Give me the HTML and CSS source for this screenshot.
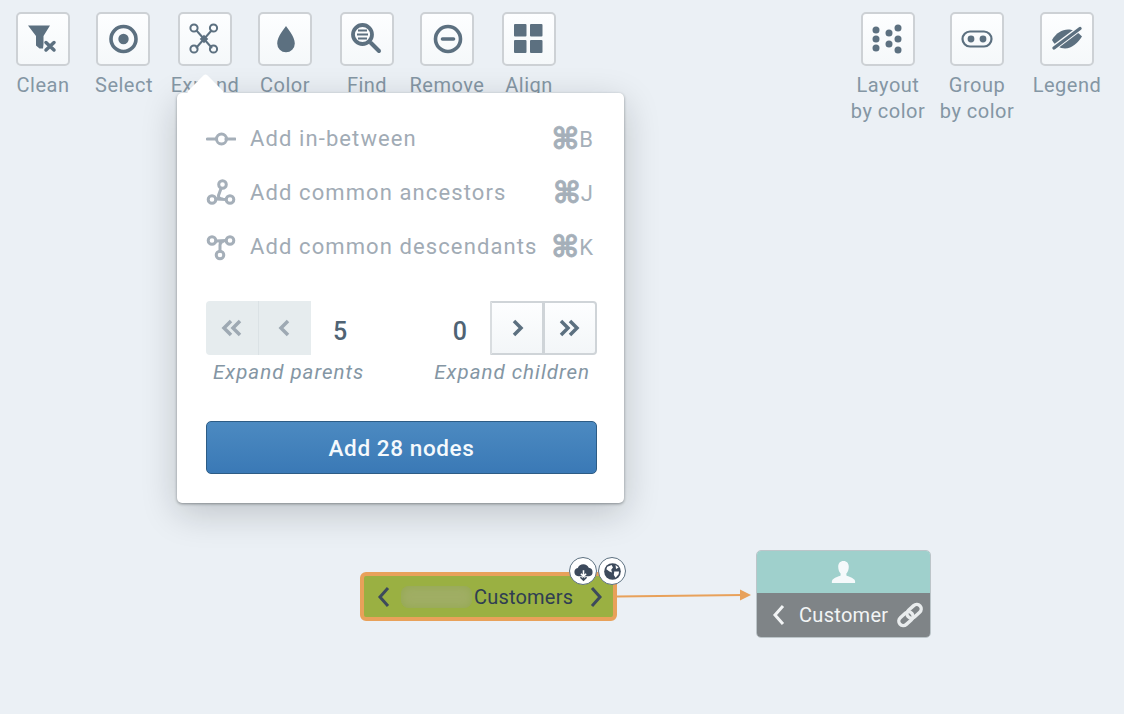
FILE: index.html
```html
<!DOCTYPE html>
<html lang="en">
<head>
<meta charset="utf-8">
<title>Graph</title>
<link rel="stylesheet" href="styles.css">
</head>
<body>
<div class="page">
  <header class="toolbar">
    <div class="tool-group">
      <div class="tool">
        <div class="tool-btn"><svg class="glyph" viewBox="0 0 54 54"><path class="fill" d="M12 13.500H34L27.500 24v8l-.5 4.500h-3.500L20 33.500V24z"/><path class="line" d="M30 30.500l8 7.500M38 30.500l-8 7.500" stroke-width="3.500"/></svg></div>
        <span class="tool-label">Clean</span>
      </div>
      <div class="tool step-b nudge">
        <div class="tool-btn"><svg class="glyph" viewBox="0 0 54 54"><circle class="line" cx="27.500" cy="27" r="12.500" stroke-width="3.600"/><circle class="fill" cx="27.500" cy="27" r="5.200"/></svg></div>
        <span class="tool-label">Select</span>
      </div>
      <div class="tool step-c">
        <div class="tool-btn"><svg class="glyph" viewBox="0 0 54 54"><path class="line" d="M18.500 18.500l15 17M33.500 18.500l-15 17" stroke-width="2"/><circle class="line" cx="16" cy="16" r="3.600" stroke-width="2"/><circle class="line" cx="35.500" cy="16" r="3.600" stroke-width="2"/><circle class="line" cx="16" cy="37" r="3.600" stroke-width="2"/><circle class="line" cx="35.500" cy="37" r="3.600" stroke-width="2"/><rect class="fill" x="23" y="24" width="6" height="6" transform="rotate(45 26 27)"/></svg></div>
        <span class="tool-label">Expand</span>
      </div>
      <div class="tool step-b">
        <div class="tool-btn"><svg class="glyph" viewBox="0 0 54 54"><path class="fill" d="M28 14c-1 2-8.800 10-8.800 17.500a8.800 8.800 0 0 0 17.600 0C36.800 24 29 16 28 14z"/></svg></div>
        <span class="tool-label">Color</span>
      </div>
      <div class="tool step-c">
        <div class="tool-btn"><svg class="glyph" viewBox="0 0 54 54"><circle class="line" cx="22.500" cy="22.500" r="9.500" stroke-width="3.800"/><path class="line" d="M31 31l8 8" stroke-width="4"/><path class="line butt" d="M18 18.500h9M17 22.500h11M18 26.500h9" stroke-width="2"/></svg></div>
        <span class="tool-label">Find</span>
      </div>
      <div class="tool step-b">
        <div class="tool-btn"><svg class="glyph" viewBox="0 0 54 54"><circle class="line" cx="28" cy="27" r="12.500" stroke-width="3.600"/><path class="line" d="M22.500 27h11" stroke-width="3.600"/></svg></div>
        <span class="tool-label">Remove</span>
      </div>
      <div class="tool step-c">
        <div class="tool-btn"><svg class="glyph" viewBox="0 0 54 54"><rect class="fill" x="12" y="12" width="12.500" height="12.500" rx="1"/><rect class="fill" x="28" y="12" width="12.500" height="12.500" rx="1"/><rect class="fill" x="12" y="28" width="12.500" height="13" rx="1"/><rect class="fill" x="28" y="28" width="12.500" height="13" rx="1"/></svg></div>
        <span class="tool-label">Align</span>
      </div>
    </div>
    <div class="tool-group">
      <div class="tool">
        <div class="tool-btn"><svg class="glyph" viewBox="0 0 54 54"><g class="fill"><circle cx="15" cy="18" r="3.500"/><circle cx="15" cy="27" r="3.500"/><circle cx="15" cy="36" r="3.500"/><circle cx="28" cy="21" r="3.500"/><circle cx="28" cy="32" r="3.500"/><circle cx="37" cy="16" r="3.500"/><circle cx="37" cy="27" r="3.500"/><circle cx="37" cy="38" r="3.500"/></g></svg></div>
        <span class="tool-label">Layout<br>by color</span>
      </div>
      <div class="tool right-b">
        <div class="tool-btn"><svg class="glyph" viewBox="0 0 54 54"><rect class="line" x="12.500" y="19.500" width="29" height="15" rx="7.500" stroke-width="2.200"/><circle class="fill" cx="21" cy="27" r="3.400"/><circle class="fill" cx="33" cy="27" r="3.400"/></svg></div>
        <span class="tool-label">Group<br>by color</span>
      </div>
      <div class="tool right-c">
        <div class="tool-btn"><svg class="glyph" viewBox="0 0 54 54"><path class="fill" d="M12 28c4-7 10-10.500 16-10.500 5 0 10 2.500 14 7-4 6-10 12-17 12-5 0-10-3-13-8.500z"/><path class="slash-gap" d="M11 38L43 14"/><path class="line" d="M14 36L40 16.500" stroke-width="3.400"/></svg></div>
        <span class="tool-label">Legend</span>
      </div>
    </div>
  </header>

  <section class="popover">
    <span class="pop-arrow"></span>
    <ul class="menu">
      <li class="menu-row">
        <svg class="menu-icon" viewBox="0 0 30 30"><path class="muted" d="M1.500 15h9M20 15h9" stroke-width="3.200"/><circle class="muted" cx="15.500" cy="15" r="5" stroke-width="3"/></svg>
        <span class="menu-text">Add in-between</span>
        <span class="kbd"><span class="cmd">⌘</span>B</span>
      </li>
      <li class="menu-row">
        <svg class="menu-icon" viewBox="0 0 30 30"><circle class="muted" cx="16.500" cy="6.500" r="3.800" stroke-width="3"/><circle class="muted" cx="6" cy="21.500" r="3.800" stroke-width="3"/><circle class="muted" cx="24" cy="21.500" r="3.800" stroke-width="3"/><path class="muted" d="M10 21l10 .5M15 10.500l-2.500 7q-.5 3 4 3.500" stroke-width="3"/></svg>
        <span class="menu-text">Add common ancestors</span>
        <span class="kbd"><span class="cmd">⌘</span>J</span>
      </li>
      <li class="menu-row">
        <svg class="menu-icon" viewBox="0 0 30 30"><circle class="muted" cx="6" cy="8.500" r="3.800" stroke-width="3"/><circle class="muted" cx="24" cy="8.500" r="3.800" stroke-width="3"/><circle class="muted" cx="14" cy="23" r="3.800" stroke-width="3"/><path class="muted" d="M10 9l10-.5M14 19v-6q0-3 4-4" stroke-width="3"/></svg>
        <span class="menu-text">Add common descendants</span>
        <span class="kbd"><span class="cmd">⌘</span>K</span>
      </li>
    </ul>

    <div class="steppers">
      <div class="stepper">
        <div class="stepper-top">
          <div class="seg seg-off">
            <span class="seg-cell"><svg class="chev" viewBox="0 0 24 24"><path d="M11 5l-7 7 7 7M20 5l-7 7 7 7"/></svg></span>
            <span class="seg-cell"><svg class="chev" viewBox="0 0 24 24"><path d="M15 5l-7 7 7 7"/></svg></span>
          </div>
          <span class="count count-left">5</span>
        </div>
        <span class="step-label label-left">Expand parents</span>
      </div>
      <div class="stepper stepper-end">
        <div class="stepper-top">
          <span class="count count-right">0</span>
          <div class="seg seg-on">
            <span class="seg-cell"><svg class="chev" viewBox="0 0 24 24"><path d="M9 5l7 7-7 7"/></svg></span>
            <span class="seg-cell"><svg class="chev" viewBox="0 0 24 24"><path d="M3 5l7 7-7 7M12 5l7 7-7 7"/></svg></span>
          </div>
        </div>
        <span class="step-label label-right">Expand children</span>
      </div>
    </div>

    <button class="primary">Add 28 nodes</button>
  </section>

  <svg class="edge" viewBox="0 0 136 14"><path d="M0 8.500L126 7" stroke="#e8a15a" stroke-width="2" fill="none"/><path d="M123 1.500L134 7l-11 5.500z" fill="#e8a15a"/></svg>

  <div class="node-src">
    <svg class="node-chev" viewBox="0 0 16 24"><path d="M12 3l-8 9 8 9"/></svg>
    <span class="redact"></span>
    <span class="node-src-name">Customers</span>
    <svg class="node-chev" viewBox="0 0 16 24"><path d="M4 3l8 9-8 9"/></svg>
  </div>

  <span class="badge badge-cloud"><svg viewBox="0 0 24 24"><path class="badge-ink" d="M6 17.500a4.800 4.800 0 0 1-.5-9.500A6.800 6.800 0 0 1 18 7.800a4.900 4.900 0 0 1 .3 9.700z"/><path class="badge-arrow" d="M12 13v9M8.500 18.500l3.500 3.500 3.500-3.500"/><path class="badge-cut" d="M12 10.500v6M9 14.500l3 3 3-3"/></svg></span>
  <span class="badge badge-globe"><svg viewBox="0 0 24 24"><circle class="badge-ink" cx="12" cy="12" r="9.500"/><path class="badge-land" d="M6 6.500l5-2 1.500 3-2 2.500 1 3-3-1-3.500-2.500zM14 12l5.500 0-.5 3-3.500 4-2-3zM15.500 4.500l3.500 3-3 1.500z"/></svg></span>

  <div class="node-dst">
    <div class="node-dst-top"><svg class="person" viewBox="0 0 26 26"><path d="M13 1c3.500 0 5.500 2.500 5.500 6 0 3-1 5.500-2.500 7v2c2 1 7 2.500 8.500 4.500 1 1.500.5 3.500.5 3.500H1s-.5-2 .5-3.500C3 18.500 8 17 10 16v-2c-1.500-1.500-2.500-4-2.500-7 0-3.500 2-6 5.500-6z"/></svg></div>
    <div class="node-dst-bar">
      <svg class="node-dst-chev" viewBox="0 0 16 24"><path d="M12 3l-8 9 8 9"/></svg>
      <span class="node-dst-name">Customer</span>
      <svg class="link" viewBox="0 0 30 30"><g transform="rotate(-42 15 15)"><rect x="1.500" y="10.500" width="16" height="9" rx="4.500"/><rect x="12.500" y="10.500" width="16" height="9" rx="4.500"/></g></svg>
    </div>
  </div>
</div>
</body>
</html>
```

FILE: styles.css
```css
* { box-sizing: border-box; }
html, body { margin: 0; padding: 0; }
body {
  background: #ebf0f5;
  font-family: Roboto, "Liberation Sans", sans-serif;
}
.page {
  position: relative;
  width: 1124px;
  height: 714px;
  overflow: hidden;
}
.toolbar {
  display: flex;
  justify-content: space-between;
  padding: 12px 30px 0 16px;
}
.tool-group { display: flex; }
.tool {
  width: 54px;
  display: flex;
  flex-direction: column;
  align-items: center;
}
.step-b { margin-left: 26px; }
.step-c { margin-left: 28px; }
.right-b { margin-left: 35px; }
.right-c { margin-left: 36px; }
.nudge .tool-label { padding-left: 2px; }
.tool-btn {
  width: 54px;
  height: 54px;
  flex: none;
  border: 2px solid #cdd1d5;
  border-radius: 5px;
  background: linear-gradient(#fdfeff, #f5f8fa);
  position: relative;
}
.glyph {
  position: absolute;
  left: -2px;
  top: -2px;
  width: 54px;
  height: 54px;
}
.fill { fill: #5c7080; }
.line {
  fill: none;
  stroke: #5c7080;
  stroke-linecap: round;
}
.butt { stroke-linecap: butt; }
.slash-gap { fill: none; stroke: #f9fbfc; stroke-width: 5.400; }
.tool-label {
  margin-top: 6px;
  font-size: 20px;
  line-height: 26px;
  letter-spacing: 0.5px;
  color: #8496a4;
  text-align: center;
  white-space: nowrap;
}

.popover {
  position: absolute;
  left: 177px;
  top: 93px;
  width: 447px;
  height: 410px;
  padding: 19px 27px 0 29px;
  background: #fff;
  border-radius: 5px;
  box-shadow: 0 1px 3px rgba(16, 22, 26, .4), 0 10px 36px rgba(16, 22, 26, .2);
}
.pop-arrow {
  position: absolute;
  left: 15px;
  top: -14px;
  width: 27px;
  height: 27px;
  background: #fff;
  border-radius: 3px;
  transform: rotate(45deg);
}
.menu { list-style: none; margin: 0; padding: 0; position: relative; }
.menu-row {
  display: flex;
  align-items: center;
  height: 54px;
}
.menu-icon { width: 30px; height: 30px; flex: none; margin-right: 14px; }
.muted { fill: none; stroke: #a5afb9; stroke-linecap: round; }
.menu-text {
  font-size: 22px;
  letter-spacing: 1.1px;
  color: #a1abb5;
  white-space: nowrap;
  position: relative;
  top: -1px;
}
.kbd {
  margin-left: auto;
  margin-right: 4px;
  font-size: 22px;
  color: #a5afb9;
  display: flex;
  align-items: center;
}
.cmd {
  font-family: "DejaVu Sans", sans-serif;
  font-weight: 700;
  font-size: 30px;
  line-height: 30px;
  -webkit-text-stroke: 0.8px #a5afb9;
}

.steppers {
  display: flex;
  justify-content: space-between;
  margin-top: 27px;
}
.stepper { display: flex; flex-direction: column; }
.stepper-end { align-items: flex-end; }
.stepper-top { display: flex; align-items: center; height: 54px; }
.seg { display: flex; width: 107px; height: 54px; }
.seg-off {
  width: 105px;
  background: #e6ecee;
  border-radius: 4px 0 0 4px;
}
.seg-off .seg-cell:first-child { border-right: 1px solid #dbe2e5; width: 53px; }
.seg-off .seg-cell { width: 52px; }
.seg-off .chev path { stroke: #9ea9b3; }
.seg-on {
  border: 2px solid #cfd4d8;
  border-left-color: #d9dde0;
  border-radius: 0 4px 4px 0;
  background: linear-gradient(#fdfeff, #f3f6f8);
}
.seg-on .seg-cell { flex: 1; }
.seg-on .seg-cell:first-child { border-right: 3px solid #cfd4d8; }
.seg-cell { display: flex; align-items: center; justify-content: center; }
.chev { width: 24px; height: 24px; }
.chev path {
  fill: none;
  stroke: #5c7080;
  stroke-width: 3.500;
  stroke-linejoin: miter;
}
.count {
  font-size: 25px;
  font-weight: 500;
  color: #4f6374;
  padding-top: 6px;
}
.count-left { margin-left: 22px; }
.count-right { margin-right: 23px; }
.step-label {
  margin-top: 3px;
  font-size: 20.500px;
  line-height: 28px;
  font-style: italic;
  letter-spacing: 1px;
  color: #8496a4;
  white-space: nowrap;
}
.label-left { margin-left: 7px; }
.label-right { margin-right: 7px; }

.primary {
  display: block;
  width: 391px;
  height: 53px;
  margin-top: 35px;
  border: 1px solid #2d5c85;
  border-radius: 5px;
  background: linear-gradient(#4c8ac1, #3a79b6);
  color: #f5f9fc;
  font-family: inherit;
  font-size: 22.500px;
  font-weight: 500;
  letter-spacing: 0.6px;
}

.edge {
  position: absolute;
  left: 617px;
  top: 588px;
  width: 136px;
  height: 14px;
}
.node-src {
  position: absolute;
  left: 360px;
  top: 572px;
  width: 257px;
  height: 49px;
  display: flex;
  align-items: center;
  padding: 0 10px 0 12px;
  background: #9ab042;
  border: 4px solid #e8a15a;
  border-radius: 6px;
}
.node-chev { width: 16px; height: 24px; flex: none; }
.node-chev path, .node-dst-chev path {
  fill: none;
  stroke: #3d4a5c;
  stroke-width: 3;
}
.redact {
  width: 71px;
  height: 22px;
  margin-left: 9px;
  border-radius: 8px;
  background: #a0ae64;
  box-shadow: inset 0 0 8px #93a850;
  flex: none;
}
.node-src-name {
  margin: 0 15px 0 2px;
  font-size: 20px;
  letter-spacing: 0.2px;
  color: #2f3d52;
  white-space: nowrap;
}
.badge {
  position: absolute;
  top: 557px;
  width: 28px;
  height: 28px;
  border-radius: 50%;
  background: #fff;
  border: 1.500px solid #5c7080;
  display: flex;
  align-items: center;
  justify-content: center;
}
.badge svg { width: 21px; height: 21px; }
.badge-cloud { left: 569px; }
.badge-globe { left: 598px; }
.badge-ink { fill: #3d4a5c; }
.badge-cut { fill: none; stroke: #fff; stroke-width: 1.800; }
.badge-arrow { fill: none; stroke: #3d4a5c; stroke-width: 1.800; }
.badge-land { fill: #fff; }

.node-dst {
  position: absolute;
  left: 756px;
  top: 550px;
  width: 175px;
  height: 88px;
  border: 1px solid #bcc5c9;
  border-radius: 5px;
  overflow: hidden;
  display: flex;
  flex-direction: column;
}
.node-dst-top {
  height: 42px;
  background: #9fd0cc;
  display: flex;
  align-items: center;
  justify-content: center;
}
.person { width: 25px; height: 25px; fill: #f5f9fb; }
.node-dst-bar {
  flex: 1;
  background: #7f8487;
  display: flex;
  align-items: center;
  padding: 0 5px 0 14px;
}
.node-dst-chev { width: 16px; height: 24px; flex: none; }
.node-dst-chev path { stroke: #f2f4f5; }
.node-dst-name {
  margin-left: 12px;
  font-size: 20px;
  letter-spacing: 0.3px;
  color: #f2f4f5;
  white-space: nowrap;
}
.link { width: 30px; height: 30px; margin-left: auto; }
.link rect { fill: none; stroke: #e9eced; stroke-width: 3.400; }
```
